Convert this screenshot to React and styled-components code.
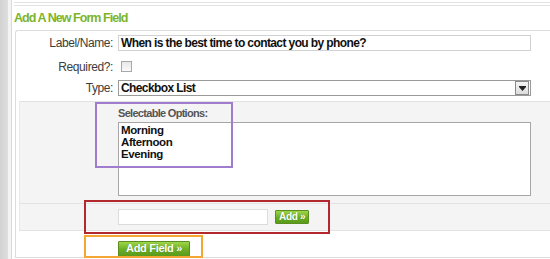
import React from 'react';
import styled, { createGlobalStyle } from 'styled-components';

const GlobalStyle = createGlobalStyle`
  body {
    margin: 0;
    background: #fff;
    font-family: "Liberation Sans", Arial, sans-serif;
    overflow: hidden;
  }
`;

const Page = styled.div`
  display: flex;
  height: 259px;
  width: 550px;
  overflow: hidden;
`;

const Rail = styled.div`
  width: 8px;
  flex-shrink: 0;
  background: linear-gradient(to right, #d2d2d2, #dedede);
`;

const Gutter = styled.div`
  width: 3px;
  flex-shrink: 0;
  background: #f4f4f4;
`;

const Main = styled.div`
  flex: 1;
  min-width: 0;
  border-left: 1px solid #dadada;
  padding-left: 2px;
`;

const TopRule = styled.div`
  height: ${(p) => p.h}px;
  border-bottom: 1px solid #e3e3e3;
`;

const Title = styled.h2`
  margin: 0;
  height: 24px;
  line-height: 25px;
  font-size: 12.5px;
  font-weight: bold;
  letter-spacing: -0.95px;
  color: #7cb52c;
`;

const Panel = styled.div`
  margin-left: 1px;
  width: 560px;
  border: 1px solid #dcdcdc;
  border-right: none;
  border-radius: 3px 0 0 0;
  padding-top: 4px;
`;

const FieldRow = styled.div`
  display: grid;
  grid-template-columns: 97px 1fr;
  column-gap: 5px;
  align-items: center;
  height: 16px;
  margin-bottom: ${(p) => p.mb}px;
`;

const Label = styled.label`
  text-align: right;
  font-size: 12px;
  letter-spacing: -0.4px;
  color: #3c3c3c;
`;

const TextBox = styled.div`
  box-sizing: border-box;
  width: ${(p) => p.w}px;
  height: 16px;
  border: 1px solid ${(p) => p.edge || '#d2d2d2'};
  background: #fff;
  padding: 0 2px;
  font-size: 12px;
  line-height: 14px;
  font-weight: bold;
  letter-spacing: -0.6px;
  color: #111;
  white-space: nowrap;
  overflow: hidden;
`;

const Check = styled.span`
  display: inline-block;
  width: 9px;
  height: 9px;
  margin-left: 3px;
  border: 1px solid #a8a8a8;
  background: linear-gradient(#e8e8e8, #fafafa);
`;

const SelectBox = styled(TextBox)`
  display: flex;
  align-items: center;
  justify-content: space-between;
  padding-right: 1px;
`;

const Arrow = styled.span`
  display: flex;
  align-items: center;
  justify-content: center;
  width: 12px;
  height: 12px;
  border: 1px solid #8a8a8a;
  background: linear-gradient(#f4f4f4, #dcdcdc);
`;

const Grey = styled.div`
  margin: 5px 0 0 3px;
  background: #f4f4f4;
  border-top: 1px solid #e2e2e2;
  border-bottom: 1px solid #e2e2e2;
  border-left: 1px solid #e8e8e8;
`;

const OptionsBlock = styled.div`
  position: relative;
  padding: 5px 0 7px 98px;
  border-bottom: 1px solid #e3e3e3;
`;

const SubLabel = styled.div`
  height: 14px;
  line-height: 12px;
  font-size: 11px;
  font-weight: bold;
  letter-spacing: -0.7px;
  color: #555;
`;

const OptionList = styled.div`
  box-sizing: border-box;
  width: 413px;
  height: 74px;
  margin-top: 1px;
  border: 1px solid #a6a6a6;
  background: #fff;
  padding: 1px 2px;
  font-size: 11.5px;
  line-height: 12px;
  font-weight: bold;
  letter-spacing: -0.4px;
  color: #111;
`;

const AddRow = styled.div`
  position: relative;
  display: flex;
  align-items: center;
  gap: 7px;
  height: 26px;
  padding-left: 98px;
`;

const GreenButton = styled.button`
  box-sizing: border-box;
  height: ${(p) => (p.big ? 16 : 14)}px;
  padding: 0 ${(p) => (p.big ? 7 : 3)}px;
  border: 1px solid #5b8d1f;
  border-radius: 1px;
  background: linear-gradient(#9fd549, #6aae24 55%, #5a9a1b);
  color: #fff;
  font-family: "Liberation Sans", Arial, sans-serif;
  font-size: ${(p) => (p.big ? 11 : 10)}px;
  font-weight: bold;
  letter-spacing: -0.3px;
  line-height: 1;
  text-shadow: 0 0 1px #4c7d16;
  cursor: pointer;
`;

const Footer = styled.div`
  position: relative;
  padding: 7px 0 0 102px;
`;

const Callout = styled.div`
  position: absolute;
  left: ${(p) => p.x}px;
  top: ${(p) => p.y}px;
  width: ${(p) => p.w}px;
  height: ${(p) => p.h}px;
  border: 2px solid ${(p) => p.color};
  box-sizing: border-box;
  pointer-events: none;
`;

export default function App() {
  return (
    <>
      <GlobalStyle />
      <Page>
        <Rail />
        <Gutter />
        <Main>
          <TopRule h={2} />
          <TopRule h={2} />
          <Title>Add A New Form Field</Title>
          <Panel>
            <FieldRow mb={7}>
              <Label>Label/Name:</Label>
              <TextBox w={413}>When is the best time to contact you by phone?</TextBox>
            </FieldRow>
            <FieldRow mb={6}>
              <Label>Required?:</Label>
              <span><Check /></span>
            </FieldRow>
            <FieldRow mb={0}>
              <Label>Type:</Label>
              <SelectBox w={413} edge="#9a9a9a">
                Checkbox List
                <Arrow>
                  <svg width="7" height="5" viewBox="0 0 7 5">
                    <path d="M0 1h7L3.5 5z" fill="#222" />
                    <rect x="0" y="0" width="7" height="1" fill="#222" />
                  </svg>
                </Arrow>
              </SelectBox>
            </FieldRow>
            <Grey>
              <OptionsBlock>
                <SubLabel>Selectable Options:</SubLabel>
                <OptionList>
                  Morning<br />Afternoon<br />Evening
                </OptionList>
                <Callout color="#a07ccc" x={75} y={0} w={138} h={66} />
              </OptionsBlock>
              <AddRow>
                <TextBox w={150} edge="#dcdcdc" />
                <GreenButton>Add »</GreenButton>
                <Callout color="#b3282d" x={64} y={-4} w={246} h={34} />
              </AddRow>
            </Grey>
            <Footer>
              <GreenButton big>Add Field »</GreenButton>
              <Callout color="#f5a733" x={68} y={4} w={119} h={23} />
            </Footer>
          </Panel>
        </Main>
      </Page>
    </>
  );
}
